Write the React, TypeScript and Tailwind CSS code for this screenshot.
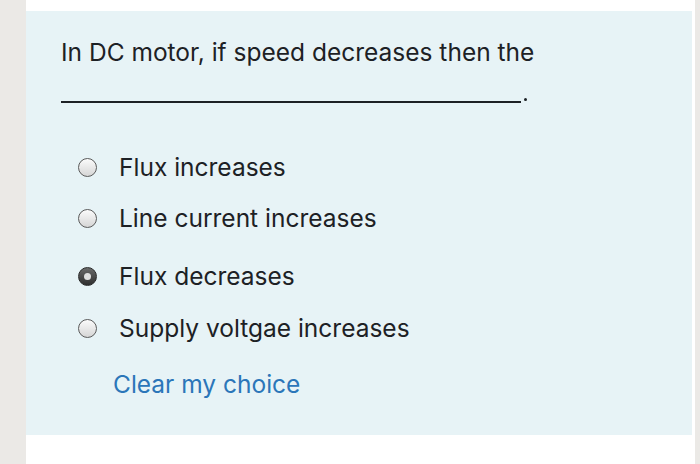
import React from 'react';

const options = [
  { label: 'Flux increases', checked: false, mt: 'mt-0' },
  { label: 'Line current increases', checked: false, mt: 'mt-[23px]' },
  { label: 'Flux decreases', checked: true, mt: 'mt-[30px]' },
  { label: 'Supply voltgae increases', checked: false, mt: 'mt-[24px]' },
];

function Radio({ checked }: { checked: boolean }) {
  if (checked) {
    return (
      <span className="flex h-[19px] w-[19px] items-center justify-center rounded-full border-[1.5px] border-[#2a2a2a] bg-gradient-to-b from-[#6b6b6b] to-[#2f2f2f]">
        <span className="h-[7px] w-[7px] rounded-full bg-[#e0e0e0]" />
      </span>
    );
  }
  return (
    <span className="block h-[19px] w-[19px] rounded-full border-[1.5px] border-[#5a5a5a] bg-gradient-to-b from-[#fbfbfb] to-[#d6d6d6]" />
  );
}

export default function App() {
  return (
    <div className="flex h-[464px] w-[700px] bg-[#ebe9e6] font-['Inter','Liberation_Sans',sans-serif]">
      <div className="ml-[26px] mr-[5px] flex flex-1 flex-col bg-white pr-[3px] pt-[11px]">
        <div className="h-[424px] bg-[#e7f3f6] pl-[35px] pt-[27px]">
          <p className="text-[24.5px] leading-[28px] text-[#1d2125]">
            In DC motor, if speed decreases then the
          </p>
          <div className="mt-[32px] flex items-end">
            <span className="block h-[2px] w-[460px] bg-[#1d2125]" />
            <span className="mb-[2px] ml-[3px] block h-[3px] w-[3px] rounded-full bg-[#1d2125]" />
          </div>
          <div className="mt-[50px] flex flex-col">
            {options.map((o) => (
              <div key={o.label} className={`flex items-center ${o.mt}`}>
                <span className="ml-[17px] mr-[22px]">
                  <Radio checked={o.checked} />
                </span>
                <span className="text-[24.5px] leading-[28px] text-[#1d2125]">{o.label}</span>
              </div>
            ))}
          </div>
          <a className="ml-[52px] mt-[28px] block text-[24.5px] leading-[28px] text-[#2b76b9]">
            Clear my choice
          </a>
        </div>
      </div>
    </div>
  );
}
